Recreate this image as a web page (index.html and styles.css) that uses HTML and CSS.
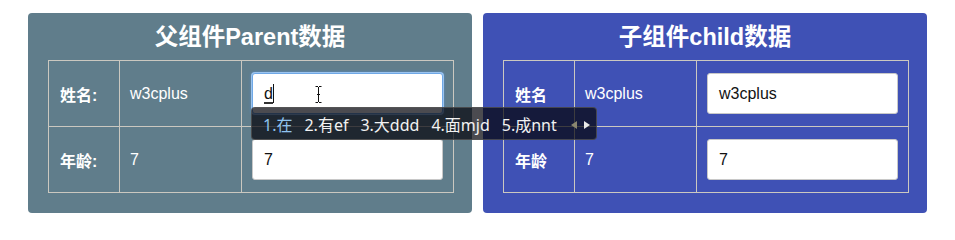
FILE: index.html
```html
<!DOCTYPE html>
<html lang="zh-CN">
<head>
<meta charset="utf-8">
<title>父组件与子组件数据</title>
<link rel="stylesheet" href="styles.css">
</head>
<body>
<div class="page">
  <section class="panel panel-parent">
    <h2 class="panel-title">父组件Parent数据</h2>
    <table class="data-table">
      <colgroup><col class="col-label"><col class="col-value"><col class="col-input"></colgroup>
      <tr>
        <td class="cell-label">姓名:</td>
        <td class="cell-value">w3cplus</td>
        <td class="cell-input">
          <div class="field field-focus">
            <span class="composing">d</span><span class="caret"></span>
            <svg class="ibeam" width="7" height="17" viewBox="0 0 7 17"><path d="M0.5 0.5h2.5M4 0.5h2.5M3.5 1v15M0.5 16.5h2.5M4 16.5h2.5M2 8.5h3" stroke="#111" stroke-width="1" fill="none"/></svg>
          </div>
        </td>
      </tr>
      <tr>
        <td class="cell-label">年龄:</td>
        <td class="cell-value">7</td>
        <td class="cell-input"><div class="field">7</div></td>
      </tr>
    </table>
  </section>
  <section class="panel panel-child">
    <h2 class="panel-title">子组件child数据</h2>
    <table class="data-table">
      <colgroup><col class="col-label"><col class="col-value"><col class="col-input"></colgroup>
      <tr>
        <td class="cell-label">姓名</td>
        <td class="cell-value">w3cplus</td>
        <td class="cell-input"><div class="field">w3cplus</div></td>
      </tr>
      <tr>
        <td class="cell-label">年龄</td>
        <td class="cell-value">7</td>
        <td class="cell-input"><div class="field">7</div></td>
      </tr>
    </table>
  </section>
  <div class="ime">
    <span class="ime-item ime-active">1.在</span>
    <span class="ime-item">2.有ef</span>
    <span class="ime-item">3.大ddd</span>
    <span class="ime-item">4.面mjd</span>
    <span class="ime-item">5.成nnt</span>
    <span class="ime-arrows"><span class="arrow arrow-left"></span><span class="arrow arrow-right"></span></span>
  </div>
</div>
</body>
</html>
```

FILE: styles.css
```css
* { box-sizing: border-box; }
html, body { margin: 0; padding: 0; background: #ffffff; }
body {
  font-family: "Liberation Sans", "Noto Sans CJK SC", sans-serif;
  width: 955px;
  height: 223px;
  overflow: hidden;
}
.page {
  position: relative;
  display: flex;
  gap: 11px;
  padding: 13px 27px 0 28px;
}
.panel {
  width: 444px;
  height: 200px;
  border-radius: 4px;
  padding: 0 20px 20px 20px;
  color: #ffffff;
}
.panel-parent { background: #607d8b; }
.panel-child { background: #3f51b5; }
.panel-title {
  margin: 0;
  height: 47px;
  line-height: 48px;
  text-align: center;
  font-size: 23.5px;
  font-weight: bold;
}
.data-table {
  width: 405px;
  border-collapse: collapse;
  table-layout: fixed;
}
.col-label { width: 71px; }
.col-value { width: 122px; }
.col-input { width: 212px; }
.data-table td {
  border: 1px solid #cbc8c0;
  height: 66px;
  vertical-align: middle;
}
.cell-label {
  padding: 1px 0 0 11px;
  font-size: 16px;
  font-weight: bold;
}
.cell-value {
  padding: 0 0 0 10px;
  font-size: 16px;
}
.cell-input {
  padding: 0 10px 0 10px;
}
.field {
  position: relative;
  height: 41px;
  width: 191px;
  background: #ffffff;
  border: 1px solid #c8c8c8;
  border-radius: 3px;
  color: #111111;
  font-size: 16px;
  line-height: 39px;
  padding: 0 11px;
}
.field-focus {
  border: 1px solid #6fa8e6;
  box-shadow: 0 0 0 1px #9cc4ef, 0 0 3px 1px rgba(80, 150, 230, 0.6);
}
.composing {
  border-bottom: 2px solid #333333;
  line-height: 17px;
  display: inline-block;
}
.caret {
  display: inline-block;
  width: 1px;
  height: 19px;
  background: #111111;
  vertical-align: -4px;
}
.ibeam {
  position: absolute;
  left: 62px;
  top: 12px;
}
.ime {
  position: absolute;
  left: 251px;
  top: 107px;
  width: 346px;
  height: 33px;
  border-radius: 4px;
  background: rgba(6, 6, 12, 0.72);
  border: 1px solid rgba(90, 90, 90, 0.7);
  display: flex;
  align-items: center;
  padding: 0 0 0 11px;
  gap: 12px;
  font-family: "Noto Sans", "Noto Sans CJK SC", sans-serif;
  font-size: 16px;
  color: #f2f2f2;
  white-space: nowrap;
}
.ime-active { color: #8fc3ee; }
.ime-arrows {
  display: flex;
  align-items: center;
  gap: 7px;
  margin-left: 2px;
  padding-top: 3px;
}
.arrow {
  width: 0;
  height: 0;
  border-top: 4px solid transparent;
  border-bottom: 4px solid transparent;
}
.arrow-left { border-right: 6px solid #8a8670; }
.arrow-right { border-left: 6px solid #e8e8e8; }
```
